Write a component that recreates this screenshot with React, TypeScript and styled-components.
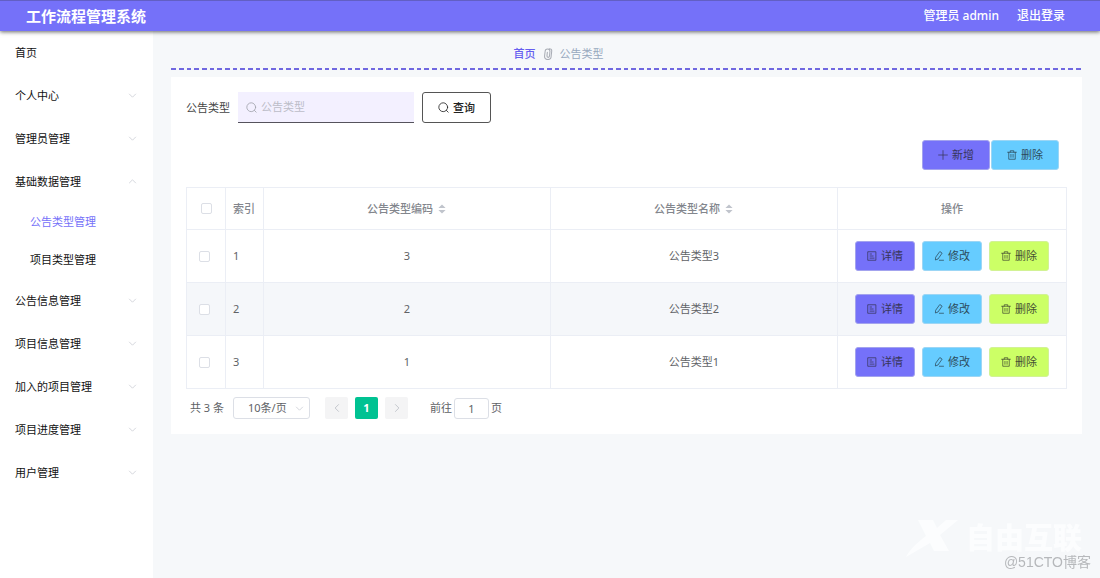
import React from "react";
import styled, { createGlobalStyle, css } from "styled-components";

const GlobalStyle = createGlobalStyle`
  *, *::before, *::after { box-sizing: border-box; }
  body { margin: 0; background: #f6f8fa; }
  body, button, input, select {
    font-family: "Noto Sans", "Noto Sans CJK SC", sans-serif;
    font-size: 11px;
    line-height: 16px;
  }
  button { cursor: pointer; }
`;

/* ---------- icons ---------- */

const Svg = styled.svg<{ $size?: number }>`
  display: block;
  flex: none;
  width: ${(p) => p.$size ?? 10}px;
  height: ${(p) => p.$size ?? 10}px;
  fill: none;
  stroke: currentColor;
  stroke-linecap: round;
  stroke-linejoin: round;
`;

type IconProps = { size?: number };

const Glyph = ({ size, children }: IconProps & { children: React.ReactNode }) => (
  <Svg $size={size} viewBox="0 0 16 16" strokeWidth="1.2" aria-hidden="true">
    {children}
  </Svg>
);

const SearchIcon = ({ size }: IconProps) => (
  <Glyph size={size}>
    <circle cx="7.6" cy="7.6" r="6.4" />
    <path d="M12.2 12.2 14.8 14.8" />
  </Glyph>
);
const PlusIcon = () => (
  <Glyph>
    <path d="M8 1v14M1 8h14" />
  </Glyph>
);
const TrashIcon = () => (
  <Glyph>
    <path d="M1 3.6h14M5.2 3.4V1.2h5.6v2.2M2.8 3.8v11h10.4v-11M6.3 7v4.6M9.7 7v4.6" />
  </Glyph>
);
const DocumentIcon = () => (
  <Glyph>
    <path d="M1.8 1.2h12.4v13.6H1.8zM4.8 4.8h2.4M4.8 8h5M4.8 11.4h6.4" />
  </Glyph>
);
const EditIcon = () => (
  <Glyph>
    <path d="M9.8 1.2 13 3.4 6.4 12.8 2.2 14.4 2.6 10.6zM8.6 14.8h6.6" />
  </Glyph>
);
const ChevronIcon = ({ size, turn = 0 }: IconProps & { turn?: number }) => (
  <Glyph size={size}>
    <path d="M2.5 5.5 8 11l5.5-5.5" transform={`rotate(${turn} 8 8)`} />
  </Glyph>
);
const ClipIcon = () => (
  <Svg $size={12} viewBox="0 0 16 16" strokeWidth="1.4" aria-hidden="true">
    <path d="M13 3.6 12.2 11a4.4 4.4 0 0 1-8.8 0l0.8-6.6a3.2 3.2 0 0 1 6.4 0l-0.6 6.4a1.7 1.7 0 0 1-3.4 0l0.5-5.2M13 3.6c0-1.8-1.6-2.6-3.4-2.6" />
  </Svg>
);
const SortIcon = () => (
  <Svg $size={10} viewBox="0 0 10 10" aria-hidden="true">
    <path d="M5 0.4 8.6 4H1.4zM5 9.6 1.4 6h7.2z" fill="#c0c4cc" stroke="none" />
  </Svg>
);

/* ---------- header ---------- */

const Header = styled.header`
  position: relative;
  z-index: 1;
  display: flex;
  align-items: center;
  justify-content: space-between;
  height: 31px;
  padding: 0 35px 0 26px;
  color: #fff;
  background: #7571f9;
  border-top: 1px solid #625fc4;
  box-shadow: 0 1px 4px rgba(0, 0, 0, 0.6);
`;
const Brand = styled.h1`
  margin: 0;
  font-size: 15px;
  line-height: 20px;
  font-weight: 700;
`;
const Account = styled.div`
  display: flex;
  gap: 18px;
  font-size: 12px;
  font-weight: 500;
`;
const LogoutLink = styled.a`
  color: inherit;
  text-decoration: none;
`;

/* ---------- side menu ---------- */

const Body = styled.div`
  display: flex;
  min-height: calc(100vh - 31px);
`;
const Side = styled.nav`
  flex: none;
  width: 153px;
  background: #fff;
`;
const MenuButton = styled.button`
  display: flex;
  align-items: center;
  justify-content: space-between;
  width: 100%;
  height: 43px;
  padding: 0 16px 0 15px;
  border: 0;
  background: none;
  color: #111;

  svg { color: #c0c4cc; }
`;
const SubLink = styled.a<{ $active?: boolean }>`
  display: flex;
  align-items: center;
  height: 38px;
  padding-left: 30px;
  text-decoration: none;
  color: ${(p) => (p.$active ? "#7571f9" : "#111")};
`;

/* ---------- content ---------- */

const Main = styled.main`
  flex: 1;
  min-width: 0;
  padding: 0 18px;
`;
const Breadcrumb = styled.nav`
  display: flex;
  align-items: center;
  justify-content: center;
  gap: 6px;
  height: 39px;
  padding: 6px 136px 0 0;
  margin-bottom: 7px;
  background: repeating-linear-gradient(
      90deg,
      #7068e0 0 5px, transparent 5px 8px,
      #7068e0 8px 13px, transparent 13px 16px,
      #7068e0 16px 20px, transparent 20px 23px
    )
    left bottom / 100% 2px no-repeat;
  color: #97a8be;

  a { color: #665ef0; font-weight: 500; text-decoration: none; }
  svg { color: #a9adb5; }
`;
const Card = styled.section`
  padding: 15px;
  background: #fff;
`;
const SearchForm = styled.form`
  display: flex;
  align-items: center;
  gap: 8px;
  color: #444;
`;
const SearchBox = styled.div`
  display: flex;
  align-items: center;
  gap: 4px;
  width: 176px;
  height: 31px;
  padding: 0 8px;
  background: #f3f0ff;
  border-bottom: 1px solid #55535c;
  color: #a0a3ab;

  input {
    flex: 1;
    min-width: 0;
    padding: 0;
    border: 0;
    outline: 0;
    background: none;
    color: #444;
  }
  input::placeholder { color: #bcbdc8; opacity: 1; }
`;

type Tone = "violet" | "sky" | "lime" | "plain";
const tones = {
  violet: css`background: #7571f9; color: #38355c; border-color: #a3a3ee;`,
  sky: css`background: #66ccff; color: #2c4a5a; border-color: #9cd6f5;`,
  lime: css`background: #ccff66; color: #454f33; border-color: #d2f295;`,
  plain: css`background: #fff; color: #222; border-color: #555;`,
};
const Button = styled.button<{ $tone: Tone; $wide?: boolean }>`
  display: flex;
  align-items: center;
  justify-content: center;
  gap: 4px;
  height: ${(p) => (p.$tone === "plain" ? 31 : 30)}px;
  padding: 0 ${(p) => (p.$wide ? 15 : 11)}px;
  border: 1px solid;
  border-radius: 3px;
  ${(p) => tones[p.$tone]}
`;
const SearchButton = styled(Button)`
  padding: 0 15px;
  font-weight: 500;
`;
const Toolbar = styled.div`
  display: flex;
  justify-content: flex-end;
  gap: 1px;
  padding: 17px 8px;
`;

/* ---------- table ---------- */

const Table = styled.table`
  width: 100%;
  table-layout: fixed;
  border-collapse: collapse;
  color: #606266;
`;
const Col = styled.col<{ $width?: number }>`
  ${(p) => p.$width && css`width: ${p.$width}px;`}
`;
const Th = styled.th<{ $left?: number }>`
  height: 42px;
  padding: 0 0 0 ${(p) => p.$left ?? 0}px;
  border: 1px solid #ebeef5;
  color: #83868d;
  font-weight: 500;
  text-align: ${(p) => (p.$left ? "left" : "center")};
`;
const Td = styled.td<{ $left?: number }>`
  height: 53px;
  padding: 0 0 0 ${(p) => p.$left ?? 0}px;
  border: 1px solid #ebeef5;
  text-align: ${(p) => (p.$left ? "left" : "center")};
`;
const Row = styled.tr<{ $shaded: boolean }>`
  background: ${(p) => (p.$shaded ? "#f5f7fa" : "#fff")};
`;
const Check = styled.input`
  appearance: none;
  display: block;
  width: 11px;
  height: 11px;
  margin: 0;
  background: #fff;
  border: 1px solid #dcdfe6;
  border-radius: 2px;
`;
const SortLabel = styled.span`
  display: flex;
  align-items: center;
  justify-content: center;
  gap: 4px;
`;
const Actions = styled.div`
  display: flex;
  justify-content: center;
  gap: 7px;
`;

/* ---------- pagination ---------- */

const Pagination = styled.div`
  display: flex;
  align-items: center;
  padding: 8px 0 0 4px;
  color: #606266;
`;
const PageSize = styled.div`
  display: grid;
  align-items: center;
  width: 77px;
  margin: 0 15px 0 9px;
  color: #c0c4cc;

  select, svg { grid-area: 1 / 1; }
  svg { justify-self: end; margin-right: 6px; pointer-events: none; }
  select {
    appearance: none;
    width: 100%;
    height: 22px;
    padding: 0 14px;
    border: 1px solid #dcdfe6;
    border-radius: 3px;
    background: #fff;
    color: #606266;
  }
`;
const Pager = styled.div`
  display: flex;
  gap: 7px;
  margin-right: 22px;
`;
const PageButton = styled.button<{ $current?: boolean }>`
  display: flex;
  align-items: center;
  justify-content: center;
  width: 23px;
  height: 22px;
  padding: 0;
  border: 0;
  border-radius: 2px;
  font-weight: 700;
  background: ${(p) => (p.$current ? "#00c292" : "#f4f4f5")};
  color: ${(p) => (p.$current ? "#fff" : "#b4b8c0")};
`;
const Jump = styled.label`
  display: flex;
  align-items: center;
  gap: 2px;

  input {
    width: 35px;
    height: 21px;
    padding: 0;
    border: 1px solid #dcdfe6;
    border-radius: 3px;
    color: #606266;
    text-align: center;
  }
`;

/* ---------- watermark ---------- */

const Watermark = styled.div`
  position: fixed;
  right: 9px;
  bottom: 7px;
  display: flex;
  flex-direction: column;
  align-items: flex-end;
  pointer-events: none;
`;
const WatermarkBrand = styled.div`
  display: flex;
  align-items: center;
  gap: 8px;
  height: 30px;
  margin-right: 9px;
  color: #fcfdfe;
  font-size: 29px;
  line-height: 30px;
  font-weight: 900;
`;
const WatermarkLogo = styled.svg`
  width: 52px;
  height: 38px;
  fill: currentColor;
`;
const WatermarkNote = styled.div`
  color: #b6b8bb;
  font-family: "Liberation Sans", "Noto Sans CJK SC", sans-serif;
  font-size: 14px;
  line-height: 18px;
`;

const topMenus = ["个人中心", "管理员管理"];
const lowerMenus = ["公告信息管理", "项目信息管理", "加入的项目管理", "项目进度管理", "用户管理"];
const rows = [
  { index: 1, code: 3, name: "公告类型3" },
  { index: 2, code: 2, name: "公告类型2" },
  { index: 3, code: 1, name: "公告类型1" },
];

const MenuEntry = ({ label, open }: { label: string; open?: boolean }) => (
  <MenuButton type="button" aria-expanded={!!open}>
    {label}
    <ChevronIcon size={9} turn={open ? 180 : 0} />
  </MenuButton>
);

export default function App() {
  return (
    <>
      <GlobalStyle />
      <Header>
        <Brand>工作流程管理系统</Brand>
        <Account>
          <span>管理员 admin</span>
          <LogoutLink href="#logout">退出登录</LogoutLink>
        </Account>
      </Header>
      <Body>
        <Side>
          <MenuButton type="button">首页</MenuButton>
          {topMenus.map((m) => <MenuEntry key={m} label={m} />)}
          <MenuEntry label="基础数据管理" open />
          <SubLink href="#notice-type" $active>公告类型管理</SubLink>
          <SubLink href="#project-type">项目类型管理</SubLink>
          {lowerMenus.map((m) => <MenuEntry key={m} label={m} />)}
        </Side>
        <Main>
          <Breadcrumb>
            <a href="#home">首页</a>
            <ClipIcon />
            <span>公告类型</span>
          </Breadcrumb>
          <Card>
            <SearchForm onSubmit={(e) => e.preventDefault()}>
              <label htmlFor="type">公告类型</label>
              <SearchBox>
                <SearchIcon size={11} />
                <input id="type" placeholder="公告类型" />
              </SearchBox>
              <SearchButton $tone="plain" type="submit">
                <SearchIcon size={11} />
                查询
              </SearchButton>
            </SearchForm>
            <Toolbar>
              <Button type="button" $tone="violet" $wide><PlusIcon />新增</Button>
              <Button type="button" $tone="sky" $wide><TrashIcon />删除</Button>
            </Toolbar>
            <Table>
              <colgroup>
                <Col $width={39} />
                <Col $width={38} />
                <Col />
                <Col />
                <Col $width={229} />
              </colgroup>
              <thead>
                <tr>
                  <Th $left={14}><Check type="checkbox" aria-label="全选" /></Th>
                  <Th $left={7}>索引</Th>
                  <Th><SortLabel>公告类型编码<SortIcon /></SortLabel></Th>
                  <Th><SortLabel>公告类型名称<SortIcon /></SortLabel></Th>
                  <Th>操作</Th>
                </tr>
              </thead>
              <tbody>
                {rows.map((r) => (
                  <Row key={r.index} $shaded={r.index === 2}>
                    <Td $left={12}><Check type="checkbox" aria-label={`选择 ${r.name}`} /></Td>
                    <Td $left={7}>{r.index}</Td>
                    <Td>{r.code}</Td>
                    <Td>{r.name}</Td>
                    <Td>
                      <Actions>
                        <Button type="button" $tone="violet"><DocumentIcon />详情</Button>
                        <Button type="button" $tone="sky"><EditIcon />修改</Button>
                        <Button type="button" $tone="lime"><TrashIcon />删除</Button>
                      </Actions>
                    </Td>
                  </Row>
                ))}
              </tbody>
            </Table>
            <Pagination>
              <span>共 3 条</span>
              <PageSize>
                <select aria-label="每页条数" defaultValue="10">
                  <option value="10">10条/页</option>
                </select>
                <ChevronIcon size={9} />
              </PageSize>
              <Pager>
                <PageButton type="button" aria-label="上一页"><ChevronIcon turn={90} /></PageButton>
                <PageButton type="button" $current>1</PageButton>
                <PageButton type="button" aria-label="下一页"><ChevronIcon turn={-90} /></PageButton>
              </Pager>
              <Jump>
                前往
                <input defaultValue="1" />
                页
              </Jump>
            </Pagination>
          </Card>
        </Main>
      </Body>
      <Watermark>
        <WatermarkBrand>
          <WatermarkLogo viewBox="0 0 52 38" aria-hidden="true">
            <path d="M12 1h15l4 8 9-8h12L34 16l9 16H28l-4-8C16 29 8 33 0 38c4-8 12-15 20-21z" />
          </WatermarkLogo>
          自由互联
        </WatermarkBrand>
        <WatermarkNote>@51CTO博客</WatermarkNote>
      </Watermark>
    </>
  );
}
